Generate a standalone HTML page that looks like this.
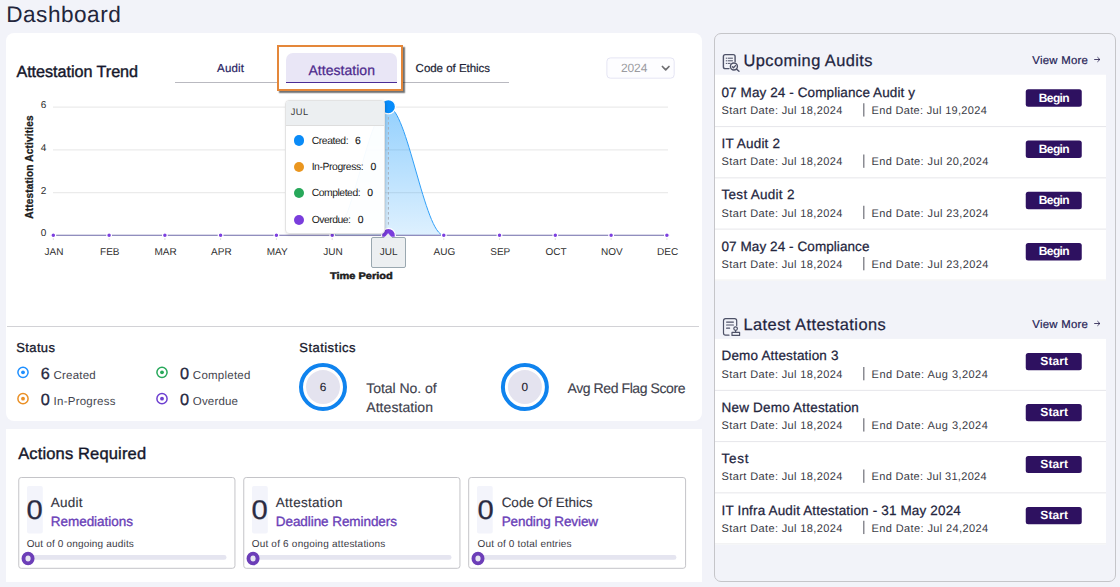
<!DOCTYPE html>
<html lang="en">
<head>
<meta charset="utf-8">
<title>Dashboard</title>
<style>
html,body{margin:0;padding:0;}
body{width:1120px;height:587px;position:relative;overflow:hidden;background:#f2f3f9;font-family:"Liberation Sans",sans-serif;}
.a{position:absolute;box-sizing:border-box;}
.t{position:absolute;white-space:nowrap;line-height:1;text-rendering:geometricPrecision;font-family:"Liberation Sans",sans-serif;}
.card{background:#fff;border-radius:8px;}
.row{background:#fff;left:715px;width:391px;height:51.25px;border-bottom:1px solid #ececf2;}
.btn{background:#2e1160;border-radius:3px;left:1025.75px;width:56px;height:17.75px;}
.sep{width:1px;background:#5b5c66;left:863.5px;height:13.5px;}
.ac{border:1px solid #c6c6c9;border-radius:3px;background:#fff;width:216.5px;top:477px;height:91.5px;}
.zb{background:#f3f4fb;border-radius:3px;width:16px;top:486px;height:47.5px;}
.bar{background:#e5e5f0;border-radius:3px;height:4.8px;top:555px;}
.knob{width:12.2px;height:13.2px;border-radius:50%;border:3.9px solid #6c3eb8;background:#e6e5f1;top:551.9px;}
</style>
</head>
<body>
<!-- left top card -->
<div class="a card" style="left:6px;top:33px;width:696px;height:388px;"></div>
<!-- left bottom card -->
<div class="a" style="left:6px;top:429px;width:696px;height:153px;background:#fff;"></div>
<!-- right panel -->
<div class="a" style="left:714px;top:33px;width:402px;height:549px;border:1px solid #c5c5c9;border-radius:7px;background:#f2f3f9;"></div>

<!-- tabs -->
<div class="a" style="left:175px;top:81.8px;width:334px;height:1px;background:#b9b9c0;"></div>
<div class="a" style="left:277px;top:45px;width:126px;height:46px;border:2px solid #e4873a;background:#fff;box-shadow:1.6px 1.6px 1.2px rgba(0,0,0,.55);"></div>
<div class="a" style="left:285.5px;top:53px;width:111px;height:29.6px;background:#e9e6f6;border-radius:7px 7px 0 0;border-bottom:1.3px solid #4a2d96;"></div>
<!-- year select -->
<svg class="a" style="left:600px;top:50px;" width="84" height="36" viewBox="600 50 84 36">
  <rect x="606.9" y="57.9" width="67.3" height="20.3" rx="3.5" fill="#fdfdff" stroke="#e5e5f4" stroke-width="1"/>
  <path d="M662.4 66.5 L665.7 69.9 L669 66.5" fill="none" stroke="#6e6e72" stroke-width="1.7" stroke-linecap="round" stroke-linejoin="round"/>
</svg>
<!-- chart -->
<svg class="a" style="left:0;top:0;" width="712" height="300" viewBox="0 0 712 300">
  <defs>
    <linearGradient id="ag" x1="0" y1="0" x2="0" y2="1">
      <stop offset="0" stop-color="#0090fb" stop-opacity=".42"/>
      <stop offset="1" stop-color="#0090fb" stop-opacity=".13"/>
    </linearGradient>
    <clipPath id="pc"><rect x="40" y="95" width="640" height="141.7"/></clipPath>
  </defs>
  <g stroke="#ebebeb" stroke-width="1.3">
    <line x1="53" y1="107.1" x2="668" y2="107.1"/>
    <line x1="53" y1="149.85" x2="668" y2="149.85"/>
    <line x1="53" y1="192.6" x2="668" y2="192.6"/>
  </g>
  <!-- ticks -->
  <g stroke="#dcdcdc" stroke-width="1">
    <line x1="53.3" y1="236" x2="53.3" y2="240"/><line x1="109.1" y1="236" x2="109.1" y2="240"/><line x1="164.9" y1="236" x2="164.9" y2="240"/><line x1="220.6" y1="236" x2="220.6" y2="240"/><line x1="276.4" y1="236" x2="276.4" y2="240"/><line x1="332.2" y1="236" x2="332.2" y2="240"/><line x1="388" y1="236" x2="388" y2="240"/><line x1="443.8" y1="236" x2="443.8" y2="240"/><line x1="499.5" y1="236" x2="499.5" y2="240"/><line x1="555.3" y1="236" x2="555.3" y2="240"/><line x1="611.1" y1="236" x2="611.1" y2="240"/><line x1="666.9" y1="236" x2="666.9" y2="240"/>
  </g>
  <!-- area -->
  <path d="M332.2 235.25 C351.2 235.25 369 106.75 388 106.75 C407 106.75 424.8 235.25 443.8 235.25 Z" fill="url(#ag)"/>
  <path d="M332.2 235.25 C351.2 235.25 369 106.75 388 106.75 C407 106.75 424.8 235.25 443.8 235.25" fill="none" stroke="#2f9ff8" stroke-width="1"/>
  <!-- crosshair -->
  <line x1="388.4" y1="107" x2="388.4" y2="226" stroke="#a4a9b2" stroke-width="0.9" stroke-dasharray="2.6 2.4"/>
  <!-- baseline -->
  <line x1="53.3" y1="235.25" x2="666.9" y2="235.25" stroke="#6c68a8" stroke-width="1.2"/>
  <g fill="#7c3fe0" stroke="#fff" stroke-width="1.2">
    <circle cx="53.3" cy="235.25" r="2.35"/><circle cx="109.1" cy="235.25" r="2.35"/><circle cx="164.9" cy="235.25" r="2.35"/><circle cx="220.6" cy="235.25" r="2.35"/><circle cx="276.4" cy="235.25" r="2.35"/><circle cx="332.2" cy="235.25" r="2.35"/><circle cx="443.8" cy="235.25" r="2.35"/><circle cx="499.5" cy="235.25" r="2.35"/><circle cx="555.3" cy="235.25" r="2.35"/><circle cx="611.1" cy="235.25" r="2.35"/><circle cx="666.9" cy="235.25" r="2.35"/>
  </g>
  <circle cx="388.3" cy="106.7" r="7.2" fill="#078cfb" stroke="#fff" stroke-width="1.3"/>
  <g clip-path="url(#pc)"><circle cx="388.45" cy="235.3" r="6.9" fill="#7a3ddc" stroke="#fff" stroke-width="1.2"/></g>
</svg>
<!-- rotated y title -->
<div class="a" style="left:30px;top:167.3px;width:0;height:0;"><div style="position:absolute;white-space:nowrap;font-size:10px;font-weight:700;color:#1c1c1c;line-height:1;transform:translate(-50%,-50%) rotate(-90deg);letter-spacing:0.2px;-webkit-text-stroke:.3px #1c1c1c;">Attestation Activities</div></div>

<!-- x tooltip JUL -->
<div class="a" style="left:371.4px;top:237.2px;width:34.4px;height:30.4px;background:#eceff1;border:1px solid #9aa8b0;border-radius:2px;"></div>
<svg class="a" style="left:382px;top:231px;" width="14" height="8" viewBox="382 231 14 8"><path d="M384.4 237.8 L388.1 233.6 L391.8 237.8 Z" fill="#eceff1" stroke="#f4f6f7" stroke-width="0.6"/><path d="M384.9 238.3 H391.3" stroke="#eceff1" stroke-width="1.4"/></svg>
<!-- tooltip -->
<div class="a" style="left:285px;top:100px;width:100px;height:134px;background:rgba(255,255,255,.955);border:1px solid #e3e3e3;border-radius:4px;box-shadow:1px 1px 3px rgba(0,0,0,.16);overflow:hidden;">
  <div style="height:23.5px;background:#eceff1;border-bottom:1px solid #dddddd;"></div>
</div>
<div class="a" style="left:293.6px;top:135.4px;width:10.2px;height:10.2px;border-radius:50%;background:#0a8bf7;"></div>
<div class="a" style="left:293.6px;top:161.5px;width:10.2px;height:10.2px;border-radius:50%;background:#ea961f;"></div>
<div class="a" style="left:293.6px;top:187.5px;width:10.2px;height:10.2px;border-radius:50%;background:#27a85a;"></div>
<div class="a" style="left:293.6px;top:214.8px;width:10.2px;height:10.2px;border-radius:50%;background:#7a3ddc;"></div>

<!-- separator -->
<div class="a" style="left:7px;top:325.7px;width:692px;height:1px;background:#d2d2d6;"></div>

<!-- status icons -->
<svg class="a" style="left:0;top:340px;" width="300" height="80" viewBox="0 340 300 80">
  <g fill="none" stroke-width="1.5">
    <circle cx="23" cy="372.3" r="5.1" stroke="#1e8fff"/><circle cx="23" cy="398.7" r="5.1" stroke="#ea8f24"/>
    <circle cx="162" cy="372.3" r="5.1" stroke="#27a85a"/><circle cx="162" cy="398.7" r="5.1" stroke="#6d3fd0"/>
  </g>
  <circle cx="23" cy="372.3" r="1.9" fill="#1e8fff"/><circle cx="23" cy="398.7" r="1.9" fill="#ea8f24"/>
  <circle cx="162" cy="372.3" r="1.9" fill="#27a85a"/><circle cx="162" cy="398.7" r="1.9" fill="#6d3fd0"/>
</svg>
<!-- stat circles -->
<svg class="a" style="left:290px;top:355px;" width="270" height="64" viewBox="290 355 270 64">
  <circle cx="323" cy="387.1" r="22" fill="#fff" stroke="#0f83ee" stroke-width="4"/>
  <circle cx="323" cy="387.1" r="17" fill="#e4e3ef"/>
  <circle cx="524.9" cy="387.1" r="22" fill="#fff" stroke="#0f83ee" stroke-width="4"/>
  <circle cx="524.9" cy="387.1" r="17" fill="#e4e3ef"/>
</svg>

<svg class="a" style="left:0;top:0;" width="1120" height="587" viewBox="0 0 1120 587"><rect x="18.75" y="477.5" width="216.2" height="90.8" rx="2.5" fill="#fff" stroke="#c4c4c8" stroke-width="1"/><rect x="27.00" y="486" width="15.8" height="47.5" rx="2" fill="#f3f4fb"/><rect x="27.00" y="555.1" width="199.5" height="4.7" rx="2.35" fill="#e5e5f0"/><ellipse cx="28.05" cy="558.5" rx="4.55" ry="4.9" fill="#e6e5f1" stroke="#6c3eb8" stroke-width="3.9"/><rect x="243.75" y="477.5" width="216.2" height="90.8" rx="2.5" fill="#fff" stroke="#c4c4c8" stroke-width="1"/><rect x="252.00" y="486" width="15.8" height="47.5" rx="2" fill="#f3f4fb"/><rect x="252.00" y="555.1" width="199.5" height="4.7" rx="2.35" fill="#e5e5f0"/><ellipse cx="253.05" cy="558.5" rx="4.55" ry="4.9" fill="#e6e5f1" stroke="#6c3eb8" stroke-width="3.9"/><rect x="468.70" y="477.5" width="216.9" height="90.8" rx="2.5" fill="#fff" stroke="#c4c4c8" stroke-width="1"/><rect x="476.95" y="486" width="15.8" height="47.5" rx="2" fill="#f3f4fb"/><rect x="476.95" y="555.1" width="199.5" height="4.7" rx="2.35" fill="#e5e5f0"/><ellipse cx="478.00" cy="558.5" rx="4.55" ry="4.9" fill="#e6e5f1" stroke="#6c3eb8" stroke-width="3.9"/><rect x="715" y="74.75" width="391" height="206" fill="#fff"/><rect x="1025.75" y="89.25" width="56" height="17.4" rx="2.5" fill="#2e1160"/><rect x="863.3" y="103.25" width="1.05" height="13.3" fill="#5b5c66"/><rect x="715" y="126.10" width="391" height="1" fill="#e6e6ea"/><rect x="1025.75" y="140.50" width="56" height="17.4" rx="2.5" fill="#2e1160"/><rect x="863.3" y="154.50" width="1.05" height="13.3" fill="#5b5c66"/><rect x="715" y="177.35" width="391" height="1" fill="#e6e6ea"/><rect x="1025.75" y="191.75" width="56" height="17.4" rx="2.5" fill="#2e1160"/><rect x="863.3" y="205.75" width="1.05" height="13.3" fill="#5b5c66"/><rect x="715" y="279.60" width="391" height="0.9" fill="#ededee"/><rect x="715" y="228.60" width="391" height="1" fill="#e6e6ea"/><rect x="1025.75" y="243.00" width="56" height="17.4" rx="2.5" fill="#2e1160"/><rect x="863.3" y="257.00" width="1.05" height="13.3" fill="#5b5c66"/><rect x="715" y="338.90" width="391" height="205.5" fill="#fff"/><rect x="1025.75" y="353.00" width="56" height="17.2" rx="2.5" fill="#2e1160"/><rect x="863.3" y="367.00" width="1.05" height="13.3" fill="#5b5c66"/><rect x="715" y="389.85" width="391" height="1" fill="#e6e6ea"/><rect x="1025.75" y="404.10" width="56" height="17.2" rx="2.5" fill="#2e1160"/><rect x="863.3" y="418.25" width="1.05" height="13.3" fill="#5b5c66"/><rect x="715" y="441.10" width="391" height="1" fill="#e6e6ea"/><rect x="1025.75" y="455.90" width="56" height="17.2" rx="2.5" fill="#2e1160"/><rect x="863.3" y="469.50" width="1.05" height="13.3" fill="#5b5c66"/><rect x="715" y="543.35" width="391" height="0.9" fill="#ededee"/><rect x="715" y="492.35" width="391" height="1" fill="#e6e6ea"/><rect x="1025.75" y="507.00" width="56" height="17.2" rx="2.5" fill="#2e1160"/><rect x="863.3" y="520.75" width="1.05" height="13.3" fill="#5b5c66"/></svg>
<!-- arrows for View More -->
<svg class="a" style="left:1090px;top:52px;" width="16" height="16" viewBox="1090 52 16 16"><path d="M1094.6 59.5 H1099.6 M1097.7 57.4 L1099.9 59.5 L1097.7 61.6" fill="none" stroke="#2a2250" stroke-width="0.85" stroke-linecap="round" stroke-linejoin="round"/></svg>
<svg class="a" style="left:1090px;top:316px;" width="16" height="16" viewBox="1090 52 16 16"><path d="M1094.6 59.5 H1099.6 M1097.7 57.4 L1099.9 59.5 L1097.7 61.6" fill="none" stroke="#2a2250" stroke-width="0.85" stroke-linecap="round" stroke-linejoin="round"/></svg>

<!-- icon: upcoming audits -->
<svg class="a" style="left:721px;top:52px;" width="22" height="22" viewBox="721 52 22 22">
  <g fill="none" stroke="#4e5268" stroke-width="1.4" stroke-linecap="round" stroke-linejoin="round">
    <path d="M729 68.6 H725.3 a1.9 1.9 0 0 1 -1.9 -1.9 V56.5 a1.9 1.9 0 0 1 1.9 -1.9 H733.2 a1.9 1.9 0 0 1 1.9 1.9 V61.6"/>
    <path d="M726.2 58.2 h0.6 M728.2 58.2 h4.3 M726.2 60.8 h0.6 M728.2 60.8 h4.3 M726.2 63.4 h0.6 M728.2 63.4 h2" stroke-width="1"/>
    <circle cx="733.9" cy="66.5" r="3.5"/>
    <path d="M736.5 69.1 L739 71.3"/>
    <path d="M732.4 66.7 l1.1 1.1 l2 -2.2" stroke-width="1.3"/>
  </g>
</svg>
<!-- icon: latest attestations -->
<svg class="a" style="left:721px;top:316px;" width="22" height="22" viewBox="721 316 22 22">
  <g fill="none" stroke="#4e5268" stroke-width="1.2" stroke-linecap="round" stroke-linejoin="round">
    <path d="M729 335.2 H725.6 a2.1 2.1 0 0 1 -2.1 -2.1 V320.7 a2.1 2.1 0 0 1 2.1 -2.1 H734.6 a2.1 2.1 0 0 1 2.1 2.1 V325.5"/>
    <path d="M726.6 322.1 h6.8 M726.6 325 h6.8 M726.6 328.2 h3"/>
    <circle cx="735.6" cy="328.6" r="1.8"/>
    <path d="M735.6 330.7 V332.4"/>
    <rect x="732" y="332.4" width="7.6" height="3"/>
  </g>
</svg>

<span class="t" style="left:6.21px;top:4px;font-size:22.6px;color:#23263c;letter-spacing:0.506px;">Dashboard</span>
<span class="t" style="left:16.43px;top:64px;font-size:16.2px;color:#15172b;letter-spacing:-0.047px;-webkit-text-stroke:0.4px #15172b;">Attestation Trend</span>
<span class="t" style="left:217.10px;top:64px;font-size:11.5px;color:#2a1f63;letter-spacing:0.147px;-webkit-text-stroke:0.2px #2a1f63;">Audit</span>
<span class="t" style="left:308.51px;top:63px;font-size:14px;color:#4d2a8d;letter-spacing:0.032px;-webkit-text-stroke:0.25px #4d2a8d;">Attestation</span>
<span class="t" style="left:415.60px;top:64px;font-size:11.5px;color:#1d1f36;letter-spacing:-0.022px;-webkit-text-stroke:0.2px #1d1f36;">Code of Ethics</span>
<span class="t" style="left:620.98px;top:62px;font-size:12px;color:#9b9b9f;letter-spacing:-0.121px;">2024</span>
<span class="t" style="left:40.67px;top:101px;font-size:10px;color:#2c2c2c;">6</span>
<span class="t" style="left:40.67px;top:144px;font-size:10px;color:#2c2c2c;">4</span>
<span class="t" style="left:40.67px;top:187px;font-size:10px;color:#2c2c2c;">2</span>
<span class="t" style="left:40.67px;top:229px;font-size:10px;color:#2c2c2c;">0</span>
<span class="t" style="left:44.55px;top:248px;font-size:10px;color:#303030;">JAN</span>
<span class="t" style="left:100.05px;top:248px;font-size:10px;color:#303030;">FEB</span>
<span class="t" style="left:154.44px;top:248px;font-size:10px;color:#303030;">MAR</span>
<span class="t" style="left:211.06px;top:248px;font-size:10px;color:#303030;">APR</span>
<span class="t" style="left:266.65px;top:248px;font-size:10px;color:#303030;">MAY</span>
<span class="t" style="left:323.17px;top:248px;font-size:10px;color:#303030;">JUN</span>
<span class="t" style="left:379.78px;top:248px;font-size:10px;color:#303030;">JUL</span>
<span class="t" style="left:433.62px;top:248px;font-size:10px;color:#303030;">AUG</span>
<span class="t" style="left:490.23px;top:248px;font-size:10px;color:#303030;">SEP</span>
<span class="t" style="left:545.47px;top:248px;font-size:10px;color:#303030;">OCT</span>
<span class="t" style="left:600.96px;top:248px;font-size:10px;color:#303030;">NOV</span>
<span class="t" style="left:657.02px;top:248px;font-size:10px;color:#303030;">DEC</span>
<span class="t" style="left:329.66px;top:272px;font-size:9.6px;color:#1c1c1c;font-weight:700;-webkit-text-stroke:0.45px #1c1c1c;transform:scaleX(1.1465);transform-origin:0.34px 50%;">Time Period</span>
<span class="t" style="left:290.67px;top:108px;font-size:9.3px;color:#3a3a3a;letter-spacing:0.502px;">JUL</span>
<span class="t" style="left:311.64px;top:137px;font-size:10.4px;color:#222222;letter-spacing:-0.412px;">Created:</span>
<span class="t" style="left:354.96px;top:137px;font-size:10.4px;color:#141414;-webkit-text-stroke:0.12px #141414;">6</span>
<span class="t" style="left:311.64px;top:163px;font-size:10.4px;color:#222222;letter-spacing:-0.420px;">In-Progress:</span>
<span class="t" style="left:370.48px;top:163px;font-size:10.4px;color:#141414;-webkit-text-stroke:0.12px #141414;">0</span>
<span class="t" style="left:311.64px;top:189px;font-size:10.4px;color:#222222;letter-spacing:-0.463px;">Completed:</span>
<span class="t" style="left:367.21px;top:189px;font-size:10.4px;color:#141414;-webkit-text-stroke:0.12px #141414;">0</span>
<span class="t" style="left:311.64px;top:216px;font-size:10.4px;color:#222222;letter-spacing:-0.503px;">Overdue:</span>
<span class="t" style="left:357.71px;top:216px;font-size:10.4px;color:#141414;-webkit-text-stroke:0.12px #141414;">0</span>
<span class="t" style="left:16.30px;top:341px;font-size:13px;color:#15172b;letter-spacing:0.360px;-webkit-text-stroke:0.3px #15172b;">Status</span>
<span class="t" style="left:299.30px;top:341px;font-size:13px;color:#15172b;letter-spacing:0.460px;-webkit-text-stroke:0.3px #15172b;">Statistics</span>
<span class="t" style="left:40.64px;top:366px;font-size:16.3px;color:#262840;-webkit-text-stroke:0.3px #262840;">6</span>
<span class="t" style="left:53.60px;top:371px;font-size:11.5px;color:#45464f;letter-spacing:0.197px;">Created</span>
<span class="t" style="left:40.64px;top:392px;font-size:16.3px;color:#262840;-webkit-text-stroke:0.3px #262840;">0</span>
<span class="t" style="left:53.60px;top:397px;font-size:11.5px;color:#45464f;letter-spacing:0.237px;">In-Progress</span>
<span class="t" style="left:179.97px;top:366px;font-size:16.3px;color:#262840;-webkit-text-stroke:0.3px #262840;">0</span>
<span class="t" style="left:192.85px;top:371px;font-size:11.5px;color:#45464f;letter-spacing:0.241px;">Completed</span>
<span class="t" style="left:179.97px;top:392px;font-size:16.3px;color:#262840;-webkit-text-stroke:0.3px #262840;">0</span>
<span class="t" style="left:192.85px;top:397px;font-size:11.5px;color:#45464f;letter-spacing:0.158px;">Overdue</span>
<span class="t" style="left:319.72px;top:382px;font-size:11.8px;color:#1a1a2a;-webkit-text-stroke:0.1px #1a1a2a;">6</span>
<span class="t" style="left:521.62px;top:382px;font-size:11.8px;color:#1a1a2a;-webkit-text-stroke:0.1px #1a1a2a;">0</span>
<span class="t" style="left:366.26px;top:381px;font-size:14px;color:#40414d;letter-spacing:-0.032px;-webkit-text-stroke:0.15px #40414d;">Total No. of</span>
<span class="t" style="left:366.26px;top:400px;font-size:14px;color:#40414d;letter-spacing:0.057px;-webkit-text-stroke:0.15px #40414d;">Attestation</span>
<span class="t" style="left:567.51px;top:381px;font-size:14px;color:#40414d;letter-spacing:-0.415px;-webkit-text-stroke:0.15px #40414d;">Avg Red Flag Score</span>
<span class="t" style="left:18.17px;top:446px;font-size:16.5px;color:#15172b;letter-spacing:0.150px;-webkit-text-stroke:0.4px #15172b;">Actions Required</span>
<span class="t" style="left:27.23px;top:497px;font-size:27px;color:#2a2b42;-webkit-text-stroke:0.25px #2a2b42;transform:scaleX(1.08);">0</span>
<span class="t" style="left:50.78px;top:496px;font-size:13.5px;color:#34353f;letter-spacing:0.228px;-webkit-text-stroke:0.15px #34353f;">Audit</span>
<span class="t" style="left:50.78px;top:515px;font-size:13.5px;color:#6a3fb8;letter-spacing:-0.032px;-webkit-text-stroke:0.35px #6a3fb8;">Remediations</span>
<span class="t" style="left:26.65px;top:540px;font-size:10px;color:#3a3a44;letter-spacing:0.172px;">Out of 0 ongoing audits</span>
<span class="t" style="left:252.23px;top:497px;font-size:27px;color:#2a2b42;-webkit-text-stroke:0.25px #2a2b42;transform:scaleX(1.08);">0</span>
<span class="t" style="left:275.78px;top:496px;font-size:13.5px;color:#34353f;letter-spacing:0.290px;-webkit-text-stroke:0.15px #34353f;">Attestation</span>
<span class="t" style="left:275.78px;top:515px;font-size:13.5px;color:#6a3fb8;letter-spacing:-0.066px;-webkit-text-stroke:0.35px #6a3fb8;">Deadline Reminders</span>
<span class="t" style="left:251.65px;top:540px;font-size:10px;color:#3a3a44;letter-spacing:0.208px;">Out of 6 ongoing attestations</span>
<span class="t" style="left:478.08px;top:497px;font-size:27px;color:#2a2b42;-webkit-text-stroke:0.25px #2a2b42;transform:scaleX(1.08);">0</span>
<span class="t" style="left:501.63px;top:496px;font-size:13.5px;color:#34353f;-webkit-text-stroke:0.15px #34353f;">Code Of Ethics</span>
<span class="t" style="left:501.63px;top:515px;font-size:13.5px;color:#6a3fb8;letter-spacing:-0.086px;-webkit-text-stroke:0.35px #6a3fb8;">Pending Review</span>
<span class="t" style="left:477.50px;top:540px;font-size:10px;color:#3a3a44;letter-spacing:0.190px;">Out of 0 total entries</span>
<span class="t" style="left:743.43px;top:53px;font-size:16.4px;color:#222440;letter-spacing:0.439px;-webkit-text-stroke:0.25px #222440;">Upcoming Audits</span>
<span class="t" style="left:1032.35px;top:56px;font-size:11.4px;color:#251c55;letter-spacing:0.242px;-webkit-text-stroke:0.2px #251c55;">View More</span>
<span class="t" style="left:721.53px;top:86px;font-size:13.5px;color:#23253d;letter-spacing:0.098px;-webkit-text-stroke:0.25px #23253d;">07 May 24 - Compliance Audit y</span>
<span class="t" style="left:721.62px;top:106px;font-size:11px;color:#3a3b46;letter-spacing:0.375px;">Start Date: Jul 18,2024</span>
<span class="t" style="left:871.62px;top:106px;font-size:11px;color:#3a3b46;letter-spacing:0.316px;">End Date: Jul 19,2024</span>
<span class="t" style="left:1038.83px;top:92px;font-size:12px;color:#ffffff;font-weight:700;letter-spacing:-0.626px;">Begin</span>
<span class="t" style="left:721.53px;top:137px;font-size:13.5px;color:#23253d;letter-spacing:0.183px;-webkit-text-stroke:0.25px #23253d;">IT Audit 2</span>
<span class="t" style="left:721.62px;top:157px;font-size:11px;color:#3a3b46;letter-spacing:0.375px;">Start Date: Jul 18,2024</span>
<span class="t" style="left:871.62px;top:157px;font-size:11px;color:#3a3b46;letter-spacing:0.391px;">End Date: Jul 20,2024</span>
<span class="t" style="left:1038.83px;top:143px;font-size:12px;color:#ffffff;font-weight:700;letter-spacing:-0.626px;">Begin</span>
<span class="t" style="left:721.53px;top:188px;font-size:13.5px;color:#23253d;letter-spacing:0.286px;-webkit-text-stroke:0.25px #23253d;">Test Audit 2</span>
<span class="t" style="left:721.62px;top:209px;font-size:11px;color:#3a3b46;letter-spacing:0.375px;">Start Date: Jul 18,2024</span>
<span class="t" style="left:871.62px;top:209px;font-size:11px;color:#3a3b46;letter-spacing:0.391px;">End Date: Jul 23,2024</span>
<span class="t" style="left:1038.83px;top:194px;font-size:12px;color:#ffffff;font-weight:700;letter-spacing:-0.626px;">Begin</span>
<span class="t" style="left:721.53px;top:240px;font-size:13.5px;color:#23253d;letter-spacing:0.077px;-webkit-text-stroke:0.25px #23253d;">07 May 24 - Compliance</span>
<span class="t" style="left:721.62px;top:260px;font-size:11px;color:#3a3b46;letter-spacing:0.375px;">Start Date: Jul 18,2024</span>
<span class="t" style="left:871.62px;top:260px;font-size:11px;color:#3a3b46;letter-spacing:0.391px;">End Date: Jul 23,2024</span>
<span class="t" style="left:1038.83px;top:245px;font-size:12px;color:#ffffff;font-weight:700;letter-spacing:-0.626px;">Begin</span>
<span class="t" style="left:743.43px;top:317px;font-size:16.4px;color:#222440;letter-spacing:0.469px;-webkit-text-stroke:0.25px #222440;">Latest Attestations</span>
<span class="t" style="left:1032.35px;top:320px;font-size:11.4px;color:#251c55;letter-spacing:0.242px;-webkit-text-stroke:0.2px #251c55;">View More</span>
<span class="t" style="left:721.53px;top:349px;font-size:13.5px;color:#23253d;letter-spacing:0.169px;-webkit-text-stroke:0.25px #23253d;">Demo Attestation 3</span>
<span class="t" style="left:721.62px;top:370px;font-size:11px;color:#3a3b46;letter-spacing:0.375px;">Start Date: Jul 18,2024</span>
<span class="t" style="left:871.62px;top:370px;font-size:11px;color:#3a3b46;letter-spacing:0.448px;">End Date: Aug 3,2024</span>
<span class="t" style="left:1040.33px;top:355px;font-size:12px;color:#ffffff;font-weight:700;letter-spacing:0.062px;">Start</span>
<span class="t" style="left:721.53px;top:401px;font-size:13.5px;color:#23253d;letter-spacing:0.198px;-webkit-text-stroke:0.25px #23253d;">New Demo Attestation</span>
<span class="t" style="left:721.62px;top:421px;font-size:11px;color:#3a3b46;letter-spacing:0.375px;">Start Date: Jul 18,2024</span>
<span class="t" style="left:871.62px;top:421px;font-size:11px;color:#3a3b46;letter-spacing:0.448px;">End Date: Aug 3,2024</span>
<span class="t" style="left:1040.33px;top:406px;font-size:12px;color:#ffffff;font-weight:700;letter-spacing:0.062px;">Start</span>
<span class="t" style="left:721.53px;top:452px;font-size:13.5px;color:#23253d;letter-spacing:0.726px;-webkit-text-stroke:0.25px #23253d;">Test</span>
<span class="t" style="left:721.62px;top:472px;font-size:11px;color:#3a3b46;letter-spacing:0.375px;">Start Date: Jul 18,2024</span>
<span class="t" style="left:871.62px;top:472px;font-size:11px;color:#3a3b46;letter-spacing:0.308px;">End Date: Jul 31,2024</span>
<span class="t" style="left:1040.33px;top:458px;font-size:12px;color:#ffffff;font-weight:700;letter-spacing:0.062px;">Start</span>
<span class="t" style="left:721.53px;top:504px;font-size:13.5px;color:#23253d;letter-spacing:0.159px;-webkit-text-stroke:0.25px #23253d;">IT Infra Audit Attestation - 31 May 2024</span>
<span class="t" style="left:721.62px;top:524px;font-size:11px;color:#3a3b46;letter-spacing:0.375px;">Start Date: Jul 18,2024</span>
<span class="t" style="left:871.62px;top:524px;font-size:11px;color:#3a3b46;letter-spacing:0.383px;">End Date: Jul 24,2024</span>
<span class="t" style="left:1040.33px;top:509px;font-size:12px;color:#ffffff;font-weight:700;letter-spacing:0.062px;">Start</span>
</body>
</html>
